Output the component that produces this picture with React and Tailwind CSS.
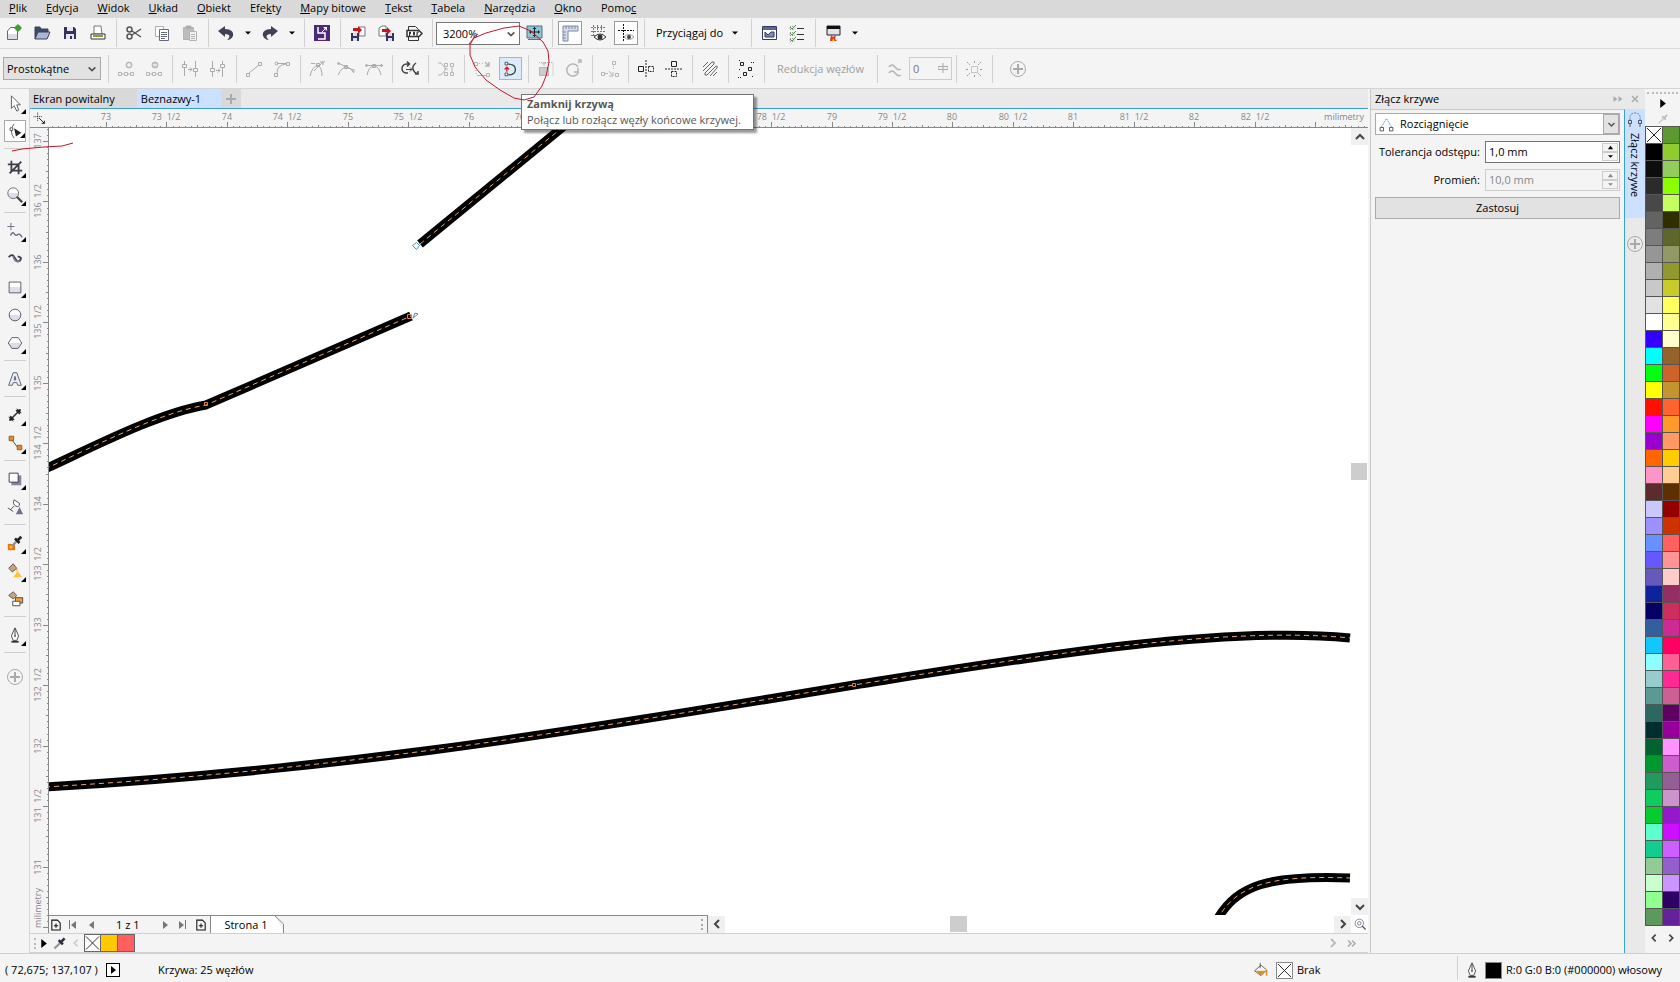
// src/App.jsx
import { useState } from "react";

const MENU = [
  ["", "P", "lik"],
  ["", "E", "dycja"],
  ["", "W", "idok"],
  ["", "U", "kład"],
  ["", "O", "biekt"],
  ["Efe", "k", "ty"],
  ["", "M", "apy bitowe"],
  ["", "T", "ekst"],
  ["", "T", "abela"],
  ["", "N", "arzędzia"],
  ["", "O", "kno"],
  ["Pomo", "c", ""],
];

// two columns, [left, right] per row; null = no colour
const PALETTE = [
  [null, "#5d9933"], ["#000000", "#91cc2e"], ["#0d0d0d", "#91cc5d"], ["#2b2b2b", "#8cff00"],
  ["#484848", "#c4ff5d"], ["#636363", "#2e2e00"], ["#7d7d7d", "#5e662b"], ["#969696", "#939966"],
  ["#b0b0b0", "#91992e"], ["#c8c8c8", "#c8cc2b"], ["#e2e2e2", "#ffff5d"], ["#ffffff", "#ffff91"],
  ["#3300ff", "#ffffcc"], ["#00ffff", "#94632b"], ["#00ff10", "#cc632b"], ["#ffff00", "#c4942e"],
  ["#ff1000", "#ff632e"], ["#ff00ff", "#ff9929"], ["#9900cc", "#ff9966"], ["#ff6600", "#ffcc00"],
  ["#ff94c8", "#ffcc91"], ["#5c2b2b", "#5e2f00"], ["#c8c8ff", "#940000"], ["#9c91ff", "#cc3300"],
  ["#6691ff", "#ff6060"], ["#6658ff", "#ff9494"], ["#6658bd", "#ffcccc"], ["#0d229c", "#942e63"],
  ["#060066", "#cc2e5e"], ["#355f9c", "#cc2a94"], ["#10c8ff", "#ff0063"], ["#8cffff", "#ff6094"],
  ["#98cccc", "#ff2994"], ["#5d9994", "#cc5f94"], ["#2e6660", "#5f0063"], ["#002e2e", "#940099"],
  ["#006330", "#ff94ff"], ["#009930", "#cc5dcc"], ["#22995d", "#945f94"], ["#10cc5f", "#cc94cc"],
  ["#06cc30", "#9419cc"], ["#5dffcc", "#cc10ff"], ["#14cc91", "#cc5fff"], ["#91cc94", "#945fcc"],
  ["#c8ffcc", "#cc94ff"], ["#8fff91", "#2e0066"], ["#5d995d", "#632299"],
];

const DARK = "#3f4254";

const ICONS = {
  newDoc: (
    <>
      <path d="M3.500 8l3-3.500h7v12h-10z" fill="#fff" stroke="#666" />
      <path d="M4 11h9v5H4z" fill="#dcdce8" />
      <circle cx="14" cy="5" r="3" fill="#3f9c35" />
      <path d="M14 1v8M10 5h8" stroke="#3f9c35" />
    </>
  ),
  open: (
    <>
      <path d="M3 16V4h5l1 2h7v3" fill="#3b4a6b" stroke={DARK} />
      <path d="M3 16l3-7h12l-3 7z" fill="#a9b6d6" stroke={DARK} />
    </>
  ),
  save: (
    <>
      <path d="M4 4h10l2 2v10H4z" fill="#35325c" />
      <path d="M7 4h6v4H7zM6 11h8v5H6z" fill="#e8e8f4" />
      <path d="M10 13h2v3h-2z" fill="#35325c" />
    </>
  ),
  print: (
    <>
      <path d="M6 3h7l1 8H6z" fill="#fff" stroke="#777" />
      <path d="M3 11h14v5H3z" fill="#fff" stroke="#333" />
      <path d="M5 13h10" stroke="#8c9a3c" strokeWidth="2" />
    </>
  ),
  cut: (
    <g fill="none" stroke="#555" strokeWidth="1.500">
      <path d="M8 8l9 6M8 12l9-6" />
      <circle cx="5.500" cy="6.500" r="2.500" />
      <circle cx="5.500" cy="13.500" r="2.500" />
    </g>
  ),
  copy: (
    <g fill="#fff" stroke="#666884">
      <path d="M3.500 3.500h8v10h-8z" strokeOpacity=".5" />
      <path d="M7.500 6.500h9v11h-9z" />
      <path d="M9 9.500h6M9 11.500h6M9 13.500h6M9 15.500h4" />
    </g>
  ),
  paste: (
    <g stroke="#b4b4b4">
      <path d="M3.500 4.500h10v12h-10z" fill="#bdbdbd" />
      <path d="M6 3h5v3H6z" fill="#aaa" />
      <path d="M9.500 8.500h7v9h-7z" fill="#f0f0f0" />
      <path d="M11 11.500h4M11 13.500h4M11 15.500h4" />
    </g>
  ),
  undo: <path d="M2 8l7-5v3c6 0 9 3 8 7-1 2-3 4-6 4 3-2 4-6-2-6v3z" fill={DARK} />,
  redo: <path d="M18 8l-7-5v3c-6 0-9 3-8 7 1 2 3 4 6 4-3-2-4-6 2-6v3z" fill={DARK} />,
  connect: (
    <>
      <path d="M2 2h16v16H2z" fill="#4c2a78" />
      <path d="M6 4v6h5M6 16h7v-6h-3" stroke="#fff" strokeWidth="1.500" fill="none" />
      <path d="M11 4h4v4z" fill="#fff" />
      <path d="M10 9l5-5" stroke="#fff" />
    </>
  ),
  importIcon: (
    <>
      <path d="M11 4h6v9h-6z" fill="#fff" stroke="#777" />
      <path d="M3 10h8v8H3z" fill="#35325c" />
      <path d="M5 10h4v3H5zM5 15h4v3H5z" fill="#dde" />
      <path d="M5 5h5V3l4 4-4 4V8H5z" fill="#c8141e" />
    </>
  ),
  exportIcon: (
    <>
      <path d="M3 5l3-2h4v10H3z" fill="#fff" stroke="#777" />
      <path d="M10 10h8v8h-8z" fill="#35325c" />
      <path d="M12 10h4v3h-4zM12 15h4v3h-4z" fill="#dde" />
      <path d="M6 6h5V4l4 4-4 4V9H6z" fill="#c8141e" />
    </>
  ),
  pdf: (
    <g fill="none" stroke="#333">
      <path d="M4.500 7V3.500h7l3 3V7M4.500 14v3.500h10V14" />
      <path d="M3 7.500h12l3 3-3 3H3z" fill="#fff" strokeWidth="1.500" />
      <path d="M5.500 13V9h1v2h-1M9.500 9v3h1V9zM13 13V9h2M13 11h1" />
    </g>
  ),
  fit: (
    <>
      <path d="M3 3h15v12H3z" fill="#8bc9cc" stroke="#54708c" />
      <path d="M4 16.500h13" stroke="#54708c" />
      <path d="M10.500 4v10M5 9h11M9 5.500h3M9 12.500h3M6.500 7.500v3M14.500 7.500v3" stroke="#1c2440" />
    </>
  ),
  rulers: (
    <>
      <path d="M3 3h15v5H8v10H3z" fill="#d6dcea" stroke="#7c88a8" />
      <path d="M6 3v3M9 3v3M12 3v3M15 3v3M3 9h3M3 12h3M3 15h3" stroke="#7c88a8" />
    </>
  ),
  gridEye: (
    <>
      <path d="M3 4.500h14M3 8.500h14M3 12.500h5M5.500 2v12M9.500 2v6M13.500 2v6" stroke="#777" strokeDasharray="2 1" />
      <path d="M6 14q6-6 12 0-6 6-12 0z" fill="#fff" stroke="#333" />
      <circle cx="12" cy="14" r="2.500" fill="#333" />
    </>
  ),
  guides: (
    <>
      <path d="M2 7.500h16M7.500 1v18" stroke="#111" strokeDasharray="2 1" />
      <path d="M8 14q5-5 10 0-5 5-10 0z" fill="#fff" stroke="#999" />
      <circle cx="13" cy="14" r="2" fill="#444" />
    </>
  ),
  options: (
    <>
      <path d="M3.500 3.500h14v13h-14z" fill="#fff" stroke="#333a60" />
      <path d="M4 4h13v3H4z" fill="#5d6690" />
      <path d="M6 14V9l3 3 3-3h3v5z" fill="#8088b4" stroke="#333a60" />
    </>
  ),
  checklist: (
    <g fill="none">
      <path d="M3 4l2 2 4-4M3 10l2 2 4-4M3 16l2 2 4-4" stroke="#3f9c35" />
      <path d="M10 5.500h7M10 11.500h7M10 16.500h7" stroke="#333" />
      <path d="M3 3.500h4v3H3zM3 9.500h4v3H3zM3 15.500h4v3H3z" stroke="#999" strokeDasharray="1 1" />
    </g>
  ),
  launcher: (
    <>
      <path d="M4 3h13v9H4z" fill="#dfe3ee" stroke="#222" />
      <path d="M4 3h13v3H4z" fill="#111" />
      <path d="M7 18l1-6 2 2 3-2-1 4 2 2z" fill="#e0301e" />
      <path d="M9 18l1-3 2 3z" fill="#ffb000" />
    </>
  ),
  addNode: (
    <g fill="none" stroke="#b5b5b5">
      <path d="M2.500 13.500h3v3h-3zM8.500 13.500h3v3h-3zM14.500 13.500h3v3h-3zM5 15h3M12 15h3" />
      <circle cx="13" cy="6" r="3" fill="#c8c8c8" />
      <path d="M11 6h4M13 4v4" stroke="#fff" />
    </g>
  ),
  delNode: (
    <g fill="none" stroke="#b5b5b5">
      <path d="M2.500 13.500h3v3h-3zM8.500 13.500h3v3h-3zM14.500 13.500h3v3h-3zM5 15h3M12 15h3" />
      <circle cx="11" cy="6" r="3" fill="#c8c8c8" />
      <path d="M9 6h4" stroke="#fff" />
    </g>
  ),
  joinNodes: (
    <g fill="none" stroke="#aaa">
      <path d="M4.500 2v3M2.500 5.500h4v3h-4zM4.500 9v8M15.500 2v7M15.500 13v5M13.500 9.500h4v3h-4zM8 10.500h4M10 8.500l2 2-2 2" />
    </g>
  ),
  breakNodes: (
    <g fill="none" stroke="#aaa">
      <path d="M4.500 2v7M2.500 9.500h4v3h-4zM4.500 13v5M14.500 2v3M12.500 5.500h4v3h-4zM14.500 9v9M8 11.500h4M10 9.500l2 2-2 2" />
    </g>
  ),
  toLine: (
    <g fill="none" stroke="#aaa">
      <path d="M5 14L15 6M2.500 14.500h3v3h-3zM14.500 3.500h3v3h-3z" />
    </g>
  ),
  toCurve: (
    <g fill="none" stroke="#aaa">
      <path d="M5 14q0-8 9-9M2.500 14.500h3v3h-3zM14.500 3.500h3v3h-3zM5 4.500h9" />
      <circle cx="4.500" cy="4.500" r="1.500" />
    </g>
  ),
  cusp: (
    <g fill="none" stroke="#aaa">
      <path d="M2 17q2-9 8-11 4 3 4 11M3 4.500h4M14 4l3-2M8.500 4.500h3v3h-3zM6 12l9-9M12 3h3v3" />
    </g>
  ),
  smooth: (
    <g fill="none" stroke="#aaa">
      <path d="M2 16q4-8 8-8 5 0 8 6M2 4l15 7M8.500 6.500h3v3h-3z" />
      <circle cx="2.500" cy="4.500" r="1" />
      <circle cx="17.500" cy="11.500" r="1" />
    </g>
  ),
  symmetric: (
    <g fill="none" stroke="#aaa">
      <path d="M3 16q2-9 7-9t7 9M2 6.500h16M8.500 5.500h3v3h-3z" />
      <circle cx="2.500" cy="6.500" r="1" />
      <circle cx="17.500" cy="6.500" r="1" />
    </g>
  ),
  reverse: (
    <g fill="none" stroke="#444">
      <path d="M9 5H6.500a4.500 4.500 0 000 9H8M7 2.500L9.500 5 7 7.500" strokeWidth="1.500" />
      <path d="M6 10.500h6M10 8.500l2 2-2 2" />
      <path d="M16 4q-4 3-3 6 1 4 5 5M18 12v3h-3" strokeWidth="1.500" />
    </g>
  ),
  extract: (
    <g fill="none" stroke="#b5b5b5">
      <path d="M2 4h3l5 6-5 6H2M8 10h4M8.500 4.500h3v3h-3zM8.500 13.500h3v3h-3zM14.500 4.500h3v3h-3zM14.500 13.500h3v3h-3zM16 8v5" />
    </g>
  ),
  extend: (
    <g fill="none" stroke="#b5b5b5">
      <path d="M2.500 3.500h3v3h-3zM14.500 14.500h3v3h-3zM5 16.500h9" />
      <path d="M7 4.500h5M4 8v7" strokeDasharray="1 2" />
      <path d="M13 3l4 4M17 3v4h-4" strokeWidth="1.500" />
    </g>
  ),
  closeCurve: (
    <g fill="none" stroke="#444">
      <path d="M8 4.500q8 0 8 6t-8 6" strokeWidth="1.500" />
      <path d="M4.500 2.500h3v3h-3zM4.500 14.500h3v3h-3z" fill="#fff" />
      <path d="M6.500 13V8M4 10.500L6.500 8 9 10.500" stroke="#d32020" strokeWidth="1.500" />
    </g>
  ),
  stretch: (
    <g fill="none" stroke="#b5b5b5">
      <path d="M3.500 8.500h9v8h-9z" fill="#ccc" />
      <path d="M3 3.500h14v14" strokeDasharray="1 1" />
      <path d="M8 7V3M6 5l2-2 2 2" />
    </g>
  ),
  rotate: (
    <g fill="none" stroke="#b5b5b5" strokeWidth="1.500">
      <path d="M14 8a6 6 0 10.500 5M14 4l3-3M14 1h3v3M14 9v4h-4" />
    </g>
  ),
  align: (
    <g fill="none" stroke="#b5b5b5">
      <path d="M1.500 13.500h3v3h-3zM12.500 2.500h3v3h-3zM15.500 14.500h3v3h-3zM5 14.500h3M9 12l4 5M13 13v4h-4" />
      <path d="M13.500 7v4" strokeDasharray="1 1" />
    </g>
  ),
  reflectH: (
    <g fill="none" stroke="#222">
      <path d="M2.500 7.500h5v5h-5z" />
      <path d="M12.500 7.500h5v5h-5zM10 1v18" strokeDasharray="2 1" />
    </g>
  ),
  reflectV: (
    <g fill="none" stroke="#222">
      <path d="M7.500 2.500h5v5h-5z" />
      <path d="M7.500 12.500h5v5h-5zM1 10h18" strokeDasharray="2 1" />
    </g>
  ),
  elastic: (
    <g fill="none" stroke="#666">
      <path d="M3 8l5-5M3 12l9-9q3-1 2 2L5 14q-1 3 2 2l9-9q2 0 1 2l-7 8M13 17l4-4" />
    </g>
  ),
  selectAll: (
    <g fill="none" stroke="#222">
      <path d="M4.500 3.500h3v3h-3zM12.500 8.500h3v3h-3zM7.500 13.500h3v3h-3z" />
      <path d="M3 1.500h2M15 3.500h3M2 18.500h3M16 17.500h2M3 10.500h2" strokeDasharray="1 1" />
    </g>
  ),
  wave: (
    <g fill="none" stroke="#b5b5b5" strokeWidth="1.500">
      <path d="M4 8q3-4 6 0t6 2M4 14q3-4 6 0t6 2" />
    </g>
  ),
  bbox: (
    <g fill="none" stroke="#999">
      <path d="M7.500 7.500h6v6h-6z" strokeDasharray="1 1" />
      <path d="M3 3l3 3M17 3l-3 3M3 17l3-3M17 17l-3-3M10.500 2v3M10.500 16v3M2 10.500h3M16 10.500h3" strokeDasharray="2 1" />
    </g>
  ),
  plus: (
    <g fill="none" stroke="#aaa">
      <circle cx="10" cy="10" r="7.500" />
      <path d="M10 5v10M5 10h10" strokeWidth="2" />
    </g>
  ),
  pick: <path d="M6 2v14l3-3 3 6 2-1-2-6h4z" fill="#fff" stroke="#555" />,
  shape: (
    <>
      <path d="M9 2q-6 8 0 16" fill="none" stroke="#555" />
      <path d="M4.500 6.500h3v3h-3z" fill="#fff" stroke="#555" />
      <path d="M9 7l8 5-6 4z" fill="#222" />
    </>
  ),
  crop: <path d="M6 3v11h12M2 7h12v11M4 17L17 4" fill="none" stroke="#3c3c48" strokeWidth="2" />,
  zoom: (
    <>
      <circle cx="8" cy="8" r="6" fill="url(#half)" stroke="#666" />
      <path d="M12 12l6 6" stroke="#444" strokeWidth="2.500" />
    </>
  ),
  freehand: (
    <g fill="none" stroke="#666884">
      <path d="M5.500 1v8M1.500 5h8" />
      <path d="M5 15q2-5 4-2t4 1 5 3" strokeWidth="1.500" />
    </g>
  ),
  artistic: (
    <g fill="none">
      <path d="M3 8q4-5 7 1t6 2q2-3-3-4" stroke="#3c3c48" strokeWidth="2" />
      <path d="M8 7q2 8 8 5" stroke="#77798c" strokeWidth="2" />
    </g>
  ),
  rect: <path d="M3.500 4.500h13v12h-13z" fill="url(#half)" stroke="#555" />,
  ellipse: <circle cx="10" cy="10" r="6.500" fill="url(#half)" stroke="#555" />,
  polygon: <path d="M2.500 10l4-6h7l4 6-4 6h-7z" fill="url(#half)" stroke="#555" />,
  text: <path d="M3 17L8 3h4l5 14h-4l-1-3H8l-1 3zM9 11h2l-1-4z" fill="#eceef6" stroke="#55586c" />,
  dimension: (
    <g stroke="#222" fill="#222">
      <path d="M5 15L15 5" strokeWidth="1.500" />
      <path d="M3 12l5 5M12 3l5 5" />
      <path d="M4 16l1-5 4 4zM16 4l-1 5-4-4z" />
    </g>
  ),
  connector: (
    <g fill="#e08b2c" stroke="#8c5a20">
      <path d="M7 7l6 8" stroke="#444" />
      <path d="M3.500 2.500h5v5h-5zM12.500 12.500h5v5h-5z" />
    </g>
  ),
  shadow: (
    <>
      <path d="M6 6h11v11H6z" fill="#8285a0" />
      <path d="M3.500 3.500h10v10h-10z" fill="#fff" stroke="#333" />
    </>
  ),
  transparency: (
    <>
      <path d="M9 2l6 4q0 5-4 3-4-2-2-7zM9 9l-4 4M2 11l6 4" fill="#fff" stroke="#444" />
      <path d="M11 18l4-8 4 8z" fill="#6d7088" />
    </>
  ),
  eyedropperFill: (
    <>
      <path d="M2 11h8v7H2z" fill="#e87410" />
      <path d="M4 13h3v3H4z" fill="#ffc84a" />
      <path d="M7 13l6-6" stroke="#8c8ea4" strokeWidth="2.500" />
      <path d="M10 5l5 5M13 7l4-4" stroke="#222" strokeWidth="3" />
    </>
  ),
  fillTool: (
    <>
      <path d="M3 7l5-5 4 5-5 4z" fill="#c8a478" stroke="#555" />
      <path d="M10 5q3 1 2 5" fill="none" stroke="#e08b2c" />
      <path d="M8 17l5-7 5 7z" fill="#ffc23c" />
    </>
  ),
  smartFill: (
    <>
      <path d="M3 6l5-4 4 4-4 4z" fill="#c8a478" stroke="#555" />
      <path d="M10.500 8.500h8v6h-8z" fill="#f2a23c" stroke="#444" />
      <path d="M7.500 12.500h8v5h-8z" fill="#fff" stroke="#444" />
    </>
  ),
  pen: (
    <>
      <path d="M10 2l4 9-2 5H8l-2-5z" fill="#fff" stroke="#444" />
      <path d="M10 3v7" stroke="#333" />
      <path d="M6 17.500h8" stroke="#333" strokeWidth="2" />
      <circle cx="10" cy="11" r="1" fill="#333" />
    </>
  ),
  stretchCurve: (
    <g fill="none">
      <path d="M4 13l6-10 6 10" stroke="#4a86d0" strokeDasharray="2 1" />
      <path d="M2.500 13.500h4v4h-4zM13.500 13.500h4v4h-4z" stroke="#444" />
    </g>
  ),
  dropper: (
    <>
      <path d="M4 16l7-7" stroke="#8c9a9a" strokeWidth="2.500" />
      <path d="M9 6l5 5M12 8l4-4" stroke="#2c2c3c" strokeWidth="3" />
    </>
  ),
  dropperOff: (
    <>
      <path d="M4 16l7-7" stroke="#ccc" strokeWidth="2" />
      <path d="M9 6l5 5M12 8l4-4" stroke="#bbb" strokeWidth="2.500" />
    </>
  ),
  newPage: (
    <g fill="none" stroke="#111" strokeWidth="1.500">
      <path d="M4 3h8l4 4v10H4zM10 8v6M7 11h6" />
    </g>
  ),
  magnifier: (
    <g fill="none" stroke="#55586c">
      <circle cx="9" cy="9" r="6" />
      <circle cx="9" cy="9" r="2.500" />
      <path d="M13 13l5 5" strokeWidth="2" />
    </g>
  ),
  bucket: (
    <>
      <path d="M2 11l8-7 7 6-7 7z" fill="#fff" stroke="#444" />
      <path d="M3 11h13l-6 6z" fill="#e08b2c" />
      <path d="M17 10v7" stroke="#e08b2c" strokeWidth="2" />
      <path d="M9 1v7" stroke="#444" />
    </>
  ),
  originCross: (
    <g fill="none" stroke="#111">
      <path d="M8.500 4v10M4 8.500h10" strokeDasharray="1 1" />
      <path d="M10 10l6 6M16 13v3h-3" />
    </g>
  ),
};

function Icon({ name, className = "size-5" }) {
  return (
    <svg viewBox="0 0 20 20" className={`shrink-0 ${className}`} aria-hidden="true">
      {ICONS[name]}
    </svg>
  );
}

function Chevron({ dir, className = "size-3 text-[#444]" }) {
  const d = { up: "M2 8l4-4 4 4", down: "M2 4l4 4 4-4", left: "M8 2L4 6l4 4", right: "M4 2l4 4-4 4" }[dir];
  return (
    <svg viewBox="0 0 12 12" className={`shrink-0 ${className}`} aria-hidden="true">
      <path d={d} fill="none" stroke="currentColor" strokeWidth="2" />
    </svg>
  );
}

function Triangle({ dir, className = "size-2 text-black" }) {
  const d = { up: "M1 6l3-4 3 4z", down: "M0 2h8L4 6z", left: "M6 0v8L1 4z", right: "M2 0v8l5-4z" }[dir];
  return (
    <svg viewBox="0 0 8 8" className={`shrink-0 ${className}`} aria-hidden="true">
      <path d={d} fill="currentColor" />
    </svg>
  );
}

function Tool({ icon, label, boxed }) {
  return (
    <button aria-label={label || icon} className="flex h-6 w-7 shrink-0 items-center justify-center">
      <span className={boxed ? "flex h-6 w-6 items-center justify-center border border-[#999] bg-white" : "flex"}>
        <Icon name={icon} />
      </span>
    </button>
  );
}

const Sep = () => <div className="mr-[3px] ml-1 h-7 w-px shrink-0 bg-[#d0d0d0]" />;

function Drop({ label }) {
  return (
    <button aria-label={label} className="flex h-6 w-4 shrink-0 items-center justify-center">
      <Triangle dir="down" className="size-[6px] text-black" />
    </button>
  );
}

function StandardBar() {
  return (
    <div className="flex h-[31px] shrink-0 items-center border-b border-[#dcdcdc]">
      <Tool icon="newDoc" />
      <Tool icon="open" />
      <Tool icon="save" />
      <Tool icon="print" />
      <Sep />
      <Tool icon="cut" />
      <Tool icon="copy" />
      <Tool icon="paste" />
      <Sep />
      <Tool icon="undo" />
      <Drop label="Lista cofania" />
      <Tool icon="redo" />
      <Drop label="Lista przywracania" />
      <Sep />
      <Tool icon="connect" />
      <Sep />
      <Tool icon="importIcon" label="Importuj" />
      <Tool icon="exportIcon" label="Eksportuj" />
      <Tool icon="pdf" />
      <Sep />
      <div className="relative">
        <input aria-label="Powiększenie" defaultValue="3200%" className="h-[23px] w-[84px] border border-[#777] bg-white pl-[6px]" />
        <Chevron dir="down" className="pointer-events-none absolute top-[7px] right-[4px] size-[10px] text-[#555]" />
      </div>
      <Tool icon="fit" />
      <Sep />
      <Tool icon="rulers" boxed />
      <Tool icon="gridEye" />
      <Tool icon="guides" boxed />
      <Sep />
      <button className="ml-2">Przyciągaj do</button>
      <div className="mx-1 flex">
        <Drop label="Przyciągaj" />
      </div>
      <Sep />
      <Tool icon="options" />
      <Tool icon="checklist" />
      <Sep />
      <Tool icon="launcher" />
      <Drop label="Uruchamianie" />
    </div>
  );
}

function PropertyBar() {
  return (
    <div className="flex h-10 shrink-0 items-center border-b border-[#d4d4d4]">
      <div className="relative mx-[3px]">
        <select aria-label="Tryb zaznaczania" className="h-[23px] w-[98px] appearance-none border border-[#aaa] bg-[#e2e2e2] pl-[3px]">
          <option>Prostokątne</option>
        </select>
        <Chevron dir="down" className="pointer-events-none absolute top-[7px] right-1 size-[10px] text-[#555]" />
      </div>
      <Sep />
      <Tool icon="addNode" />
      <Tool icon="delNode" />
      <Sep />
      <Tool icon="joinNodes" />
      <Tool icon="breakNodes" />
      <Sep />
      <Tool icon="toLine" />
      <Tool icon="toCurve" />
      <Sep />
      <Tool icon="cusp" />
      <Tool icon="smooth" />
      <Tool icon="symmetric" />
      <Sep />
      <Tool icon="reverse" />
      <Sep />
      <Tool icon="extract" />
      <Sep />
      <Tool icon="extend" />
      <div className="relative flex w-7 justify-center">
        <button aria-label="Zamknij krzywą" className="flex h-[23px] w-[23px] items-center justify-center border border-[#8cbce8] bg-[#dcebf9]">
          <Icon name="closeCurve" className="size-[18px]" />
        </button>
        <div
          role="tooltip"
          className="absolute top-[37px] left-[25px] z-20 border border-[#767676] bg-white py-px pr-3 pl-[5px] leading-4 whitespace-nowrap text-[#575757] shadow-[3px_3px_2px_rgba(0,0,0,0.4)]"
        >
          <div className="font-bold">Zamknij krzywą</div>
          <div>Połącz lub rozłącz węzły końcowe krzywej.</div>
        </div>
      </div>
      <Sep />
      <Tool icon="stretch" />
      <Tool icon="rotate" />
      <Sep />
      <Tool icon="align" />
      <Sep />
      <Tool icon="reflectH" />
      <Tool icon="reflectV" />
      <Sep />
      <Tool icon="elastic" />
      <Sep />
      <Tool icon="selectAll" />
      <Sep />
      <button disabled className="mx-[9px] text-[#a0a0a0]">Redukcja węzłów</button>
      <Sep />
      <Tool icon="wave" />
      <div className="relative">
        <input aria-label="Redukcja" disabled defaultValue="0" className="h-[23px] w-[43px] border border-[#ccc] pl-[3px] text-[#777]" />
        <svg viewBox="0 0 10 10" className="absolute top-[6px] right-1 size-[10px]" aria-hidden="true">
          <path d="M0 3.500h10v3H0zM5 0v10" fill="none" stroke="#aaa" />
        </svg>
      </div>
      <Sep />
      <Tool icon="bbox" />
      <Sep />
      <div className="ml-2 flex">
        <Tool icon="plus" label="Dostosuj" />
      </div>
    </div>
  );
}

const TOOLBOX = [
  ["pick", "shape"],
  ["crop", "zoom"],
  ["freehand", "artistic", "rect", "ellipse", "polygon"],
  ["text"],
  ["dimension", "connector"],
  ["shadow", "transparency"],
  ["eyedropperFill", "fillTool", "smartFill"],
  ["pen"],
];
const NO_FLYOUT = ["artistic", "transparency", "smartFill"];

function Toolbox() {
  return (
    <aside className="flex w-[30px] shrink-0 flex-col items-center border-r border-[#d4d4d4]">
      {TOOLBOX.map((group, i) => (
        <div key={i} className="flex flex-col items-center">
          {group.map((name) => (
            <button
              key={name}
              aria-label={name}
              className={
                name === "shape"
                  ? "relative my-[3px] flex h-[22px] w-[22px] items-center justify-center border border-[#aaa] bg-white"
                  : "relative flex h-7 w-[22px] items-center justify-center"
              }
            >
              <Icon name={name} className="size-[18px]" />
              {!NO_FLYOUT.includes(name) && (
                <svg viewBox="0 0 5 5" className="absolute right-0 bottom-[3px] size-[5px]" aria-hidden="true">
                  <path d="M5 0v5H0z" />
                </svg>
              )}
            </button>
          ))}
          <div className="mt-[3px] mb-1 h-px w-[22px] bg-[#d0d0d0]" />
        </div>
      ))}
      <button aria-label="Dostosuj przybornik" className="mt-[10px]">
        <Icon name="plus" />
      </button>
    </aside>
  );
}

const STEP = 60.46; // half a millimetre at 3200%

function label(n) {
  return Number.isInteger(n) ? `${n}` : `${Math.floor(n)}\u00a0\u00a01/2`;
}

function Ticks({ start, count, vertical }) {
  const out = [];
  for (let i = -10; i < count * 10; i++) {
    const p = Math.round(start + (i * STEP) / 10);
    const len = i % 10 === 0 ? 5 : i % 5 === 0 ? 2 : 1;
    out.push(vertical ? `M${18 - len} ${p}.5h${len}` : `M${p}.5 ${18 - len}v${len}`);
  }
  return <path d={out.join("")} stroke="#888" fill="none" />;
}

function TopRuler() {
  return (
    <div className="flex h-[19px] shrink-0 border-b border-[#888]">
      <div className="w-[18px] shrink-0">
        <Icon name="originCross" className="size-[18px]" />
      </div>
      <div className="relative min-w-0 flex-1">
        <svg className="block h-[18px] w-full" fontSize="9" fill="#888" textAnchor="middle">
          <Ticks start={58} count={21} />
          {Array.from({ length: 20 }, (_, i) => (
            <text key={i} x={Math.round(58 + i * STEP)} y="11">{label(73 + i / 2)}</text>
          ))}
        </svg>
        <span className="absolute top-[2px] right-1 bg-[#f4f4f4] text-[9px] leading-3 text-[#888]">milimetry</span>
      </div>
    </div>
  );
}

function SideRuler() {
  return (
    <svg className="block h-full w-[19px] shrink-0 border-r border-[#888]" fontSize="9" fill="#888" textAnchor="middle">
      <Ticks start={13} count={14} vertical />
      {Array.from({ length: 13 }, (_, i) => {
        const y = Math.round(13 + i * STEP);
        return (
          <text key={i} x="0" y="0" transform={`translate(11 ${y}) rotate(-90)`}>{label(137 - i / 2)}</text>
        );
      })}
      <text transform="translate(11 780) rotate(-90)">milimetry</text>
    </svg>
  );
}

const CURVES = [
  "M371 116L520 -6",
  "M-4 341C50 316 110 285 157 277L362 188",
  "M-4 659C270 643 480 611 805 557C970 531 1170 497 1301 510",
  "M1168 792C1187 757 1220 747 1301 750",
];

function Drawing() {
  return (
    <svg className="block h-full min-w-0 flex-1 bg-white" fill="none">
      {CURVES.map((d) => (
        <g key={d}>
          <path d={d} stroke="#000" strokeWidth="9" />
          <path d={d} stroke="#e8a86a" strokeDasharray="5 4" />
        </g>
      ))}
      <g stroke="#e08030">
        <path d="M155.500 274.500h3v3h-3zM803.500 555.500h3v3h-3zM358.500 186.500h4v4h-4z" />
      </g>
      <path d="M363.500 117.500l4-3 3 3-3 4zM364 190l2-5 3 1z" stroke="#3c96d8" fill="#fff" />
    </svg>
  );
}

function PageBar() {
  return (
    <div className="flex h-[18px] shrink-0 bg-white">
      <div className="flex w-[659px] shrink-0 items-center border-t border-r border-[#888] bg-[#f4f4f4] text-[#777]">
        <button aria-label="Dodaj stronę" className="w-4"><Icon name="newPage" className="size-[14px]" /></button>
        <button aria-label="Pierwsza strona" className="ml-1 flex h-[9px] items-center border-l border-[#777]"><Triangle dir="left" className="size-[8px]" /></button>
        <button aria-label="Poprzednia strona" className="ml-[10px] flex"><Triangle dir="left" className="size-[8px]" /></button>
        <span className="ml-5 text-black">1 z 1</span>
        <button aria-label="Następna strona" className="ml-[22px] flex"><Triangle dir="right" className="size-[8px]" /></button>
        <button aria-label="Ostatnia strona" className="ml-2 flex h-[9px] items-center border-r border-[#777]"><Triangle dir="right" className="size-[8px]" /></button>
        <button aria-label="Dodaj stronę na końcu" className="ml-2 w-4"><Icon name="newPage" className="size-[14px]" /></button>
        <button className="relative h-[17px] w-[74px] border-l border-[#888] bg-white pr-1 text-black">
          Strona 1
          <svg viewBox="0 0 9 17" className="absolute top-0 right-0 h-[17px] w-[9px]" aria-hidden="true">
            <path d="M0 0h9v17z" fill="#f4f4f4" />
            <path d="M0 0l8.500 8v9" fill="none" stroke="#888" />
          </svg>
        </button>
        <div className="mr-1 ml-auto h-[11px] border-l-2 border-dotted border-[#aaa]" />
      </div>
      <div className="flex min-w-0 flex-1 items-center">
        <button aria-label="W lewo" className="flex h-[17px] w-[17px] items-center justify-center bg-[#f0f0f0]"><Chevron dir="left" /></button>
        <div className="flex h-[17px] flex-1">
          <div className="ml-[37%] h-[16px] w-[17px] bg-[#cdcdcd]" />
        </div>
        <button aria-label="W prawo" className="flex h-[17px] w-[17px] items-center justify-center bg-[#f0f0f0]"><Chevron dir="right" /></button>
        <button aria-label="Nawigator" className="flex w-[17px] justify-center"><Icon name="magnifier" className="size-[14px]" /></button>
      </div>
    </div>
  );
}

function NoColor({ className }) {
  return (
    <svg viewBox="0 0 16 16" className={`bg-white ${className}`} aria-hidden="true">
      <path d="M1 1l14 14M15 1L1 15" stroke="#222" />
    </svg>
  );
}

function DocPalette() {
  return (
    <div className="flex h-5 shrink-0 items-center border-t border-b border-[#d0d0d0]">
      <div className="ml-1 h-[11px] border-l-2 border-dotted border-[#bbb]" />
      <Triangle dir="right" className="ml-[3px] size-[9px]" />
      <Icon name="dropper" className="ml-[3px] size-[17px]" />
      <Chevron dir="left" className="ml-[3px] size-[10px] text-[#ccc]" />
      <div className="ml-[3px] flex border border-[#666]">
        <NoColor className="size-4 border-r border-[#666]" />
        <div className="h-4 w-[17px] border-r border-[#666] bg-[#ffc800]" />
        <div className="size-4 bg-[#ff605e]" />
      </div>
      <Chevron dir="right" className="ml-auto size-3 text-[#bbb]" />
      <div className="mr-[10px] ml-[6px] flex text-[#aaa]">
        <Chevron dir="right" className="size-[9px]" />
        <Chevron dir="right" className="-ml-[5px] size-[9px]" />
      </div>
    </div>
  );
}

function Spinner({ id, value, disabled }) {
  return (
    <div className={`flex h-[22px] flex-1 border p-px ${disabled ? "border-[#ccc]" : "border-[#777] bg-white"}`}>
      <input id={id} defaultValue={value} disabled={disabled} className="w-0 min-w-0 flex-1 pl-[2px] disabled:text-[#888]" />
      <div className="flex w-4 flex-col">
        <button aria-label="Więcej" disabled={disabled} className="flex h-[9px] items-center justify-center border border-[#ccc] bg-[#f4f4f4]">
          <Triangle dir="up" className={disabled ? "size-[7px] text-[#888]" : "size-[7px]"} />
        </button>
        <button aria-label="Mniej" disabled={disabled} className="flex h-[9px] items-center justify-center border border-[#ccc] bg-[#f4f4f4]">
          <Triangle dir="down" className={disabled ? "size-[5px] text-[#888]" : "size-[5px]"} />
        </button>
      </div>
    </div>
  );
}

function Docker() {
  return (
    <section className="ml-[2px] flex w-[275px] shrink-0 flex-col border-l border-[#c8c8c8]">
      <header className="flex h-5 shrink-0 items-center bg-[#e9e9e9] pl-1">
        <h2>Złącz krzywe</h2>
        <button aria-label="Zwiń" className="ml-auto flex text-[#aaa]">
          <Triangle dir="right" className="size-[6px]" />
          <Triangle dir="right" className="-ml-px size-[6px]" />
        </button>
        <button aria-label="Zamknij" className="mr-[6px] ml-2">
          <svg viewBox="0 0 8 8" className="size-2"><path d="M1 1l6 6M7 1L1 7" stroke="#aaa" strokeWidth="1.500" /></svg>
        </button>
      </header>
      <div className="flex flex-1">
        <div className="flex flex-1 flex-col gap-[6px] border-t border-r border-t-[#c8c8c8] border-r-[#3a9fd6] px-[4px] py-[3px]">
          <div className="relative">
            <Icon name="stretchCurve" className="pointer-events-none absolute top-[3px] left-[3px] size-[17px]" />
            <select aria-label="Typ łączenia" className="block h-[22px] w-full appearance-none border border-[#aaa] bg-white pl-6">
              <option>Rozciągnięcie</option>
            </select>
            <div className="pointer-events-none absolute top-px right-px flex h-5 w-4 items-center justify-center border border-[#aaa] bg-[#e2e2e2]">
              <Chevron dir="down" className="size-[9px] text-[#555]" />
            </div>
          </div>
          <div className="flex items-center gap-[5px]">
            <label htmlFor="gap" className="w-[105px] text-right">Tolerancja odstępu:</label>
            <Spinner id="gap" value="1,0 mm" />
          </div>
          <div className="flex items-center gap-[5px]">
            <label htmlFor="radius" className="w-[105px] text-right">Promień:</label>
            <Spinner id="radius" value="10,0 mm" disabled />
          </div>
          <button className="h-[22px] border border-[#aaa] bg-[#e2e2e2]">Zastosuj</button>
        </div>
        <div className="flex w-5 shrink-0 flex-col items-center bg-[#e9e9e9]">
          <button className="flex h-[109px] w-full flex-col items-center gap-1 bg-[#cce0ff] pt-[2px]">
            <svg viewBox="0 0 16 18" className="h-[18px] w-4 shrink-0" fill="none" aria-hidden="true">
              <path d="M3 9Q2 2 8 2t5 7" stroke="#4a86d0" strokeDasharray="2 1" />
              <path d="M1.500 9.500h3v3h-3zM11.500 9.500h3v3h-3zM3 13v3M13 13v3" stroke="#555" />
            </svg>
            <span className="leading-4 whitespace-nowrap [writing-mode:vertical-rl]">Złącz krzywe</span>
          </button>
          <button aria-label="Dodaj okno dokowane" className="mt-4"><Icon name="plus" /></button>
        </div>
      </div>
    </section>
  );
}

function Palette() {
  return (
    <aside className="flex w-[35px] shrink-0 flex-col">
      <div className="mx-[2px] mt-[3px] border-t-2 border-dotted border-[#bbb]" />
      <button aria-label="Menu palety" className="flex h-[18px] shrink-0 items-center justify-center"><Triangle dir="right" className="size-[9px]" /></button>
      <div className="flex h-[14px] shrink-0 items-center justify-center"><Icon name="dropperOff" className="size-[14px]" /></div>
      <div className="grid shrink-0 grid-cols-2 gap-px border border-[#555] bg-[#555]">
        {PALETTE.flat().map((c, i) =>
          c ? <button key={i} aria-label={c} className="h-4" style={{ background: c }} /> : <NoColor key={i} className="size-4" />
        )}
      </div>
      <div className="mt-1 flex h-4 items-center justify-around">
        <button aria-label="Poprzednie kolory"><Chevron dir="left" className="size-[10px] text-[#444]" /></button>
        <button aria-label="Następne kolory"><Chevron dir="right" className="size-[10px] text-[#444]" /></button>
      </div>
    </aside>
  );
}

function StatusBar() {
  return (
    <footer className="flex h-[29px] shrink-0 items-center border-t border-[#d0d0d0] pt-1 pr-[15px] pl-[5px]">
      <span className="w-[101px]">( 72,675; 137,107 )</span>
      <button aria-label="Więcej informacji" className="flex size-[14px] items-center justify-center border border-black bg-white">
        <Triangle dir="right" />
      </button>
      <span className="ml-[38px]">Krzywa: 25 węzłów</span>
      <div className="ml-auto flex w-[204px] items-center">
        <Icon name="bucket" className="size-4" />
        <NoColor className="mr-1 ml-[7px] size-[17px] border border-[#888]" />
        Brak
      </div>
      <div className="-mt-1 h-6 w-px bg-[#d0d0d0]" />
      <div className="ml-[5px] flex w-[202px] items-center whitespace-nowrap">
        <Icon name="pen" className="size-[18px]" />
        <div className="mr-1 ml-1 size-[17px] shrink-0 border border-[#888] bg-black" />
        R:0 G:0 B:0 (#000000) włosowy
      </div>
    </footer>
  );
}

export default function App() {
  const [tab, setTab] = useState("Beznazwy-1");

  return (
    <div className="relative flex h-screen flex-col overflow-hidden bg-[#f4f4f4] font-['Open_Sans','Noto_Sans',sans-serif] text-[11px] leading-4 text-black">
      <svg className="absolute size-0" aria-hidden="true">
        <linearGradient id="half" x2="0" y2="1">
          <stop offset=".5" stopColor="#fff" />
          <stop offset=".5" stopColor="#dcdeec" />
        </linearGradient>
      </svg>

      <nav className="flex h-[18px] shrink-0 items-start gap-[19px] bg-[#d9d9d9] pl-[9px]">
        {MENU.map(([pre, key, post]) => (
          <button key={pre + key + post}>
            {pre}<u>{key}</u>{post}
          </button>
        ))}
      </nav>
      <StandardBar />
      <PropertyBar />

      <div className="flex min-h-0 flex-1">
        <Toolbox />
        <main className="flex min-w-0 flex-1 flex-col">
          <div className="flex h-5 shrink-0 border-b border-[#3a9fd6] bg-[#e9e9e9]">
            {["Ekran powitalny", "Beznazwy-1"].map((t) => (
              <button
                key={t}
                onClick={() => setTab(t)}
                className={t === tab ? "bg-[#cce0ff] pr-5 pl-1" : "bg-[#d9d9d9] pr-[22px] pl-[3px]"}
              >
                {t}
              </button>
            ))}
            <button aria-label="Nowy dokument" className="flex w-5 items-center justify-center bg-[#d9d9d9]">
              <svg viewBox="0 0 10 10" className="size-[10px]"><path d="M5 0v10M0 5h10" stroke="#aaa" strokeWidth="2" /></svg>
            </button>
          </div>
          <TopRuler />
          <div className="flex min-h-0 flex-1">
            <SideRuler />
            <div className="flex min-w-0 flex-1 flex-col">
              <div className="flex min-h-0 flex-1">
                <Drawing />
                <div className="flex w-[17px] shrink-0 flex-col bg-white">
                  <button aria-label="W górę" className="flex h-[17px] items-center justify-center bg-[#f0f0f0]"><Chevron dir="up" /></button>
                  <div className="flex flex-1 flex-col justify-center pb-[100px]">
                    <div className="h-[17px] w-4 bg-[#cdcdcd]" />
                  </div>
                  <button aria-label="W dół" className="flex h-[17px] items-center justify-center bg-[#f0f0f0]"><Chevron dir="down" /></button>
                </div>
              </div>
              <PageBar />
            </div>
          </div>
          <DocPalette />
        </main>
        <Docker />
        <Palette />
      </div>
      <StatusBar />

      {/* hand-drawn marks over the window */}
      <svg className="pointer-events-none absolute inset-0 z-50 size-full" fill="none" stroke="#c4182c" aria-hidden="true">
        <path d="M469 44L474 38 486 33 504 28 519 26 531 31 543 42 548 51 549 62 546 76 542 86 534 97 524 100 514 98 500 90 486 80 475 67 470 55 470 45 474 37 478 34" />
        <path d="M12 151L22 149 44 147 62 146 73 143" />
      </svg>
    </div>
  );
}
